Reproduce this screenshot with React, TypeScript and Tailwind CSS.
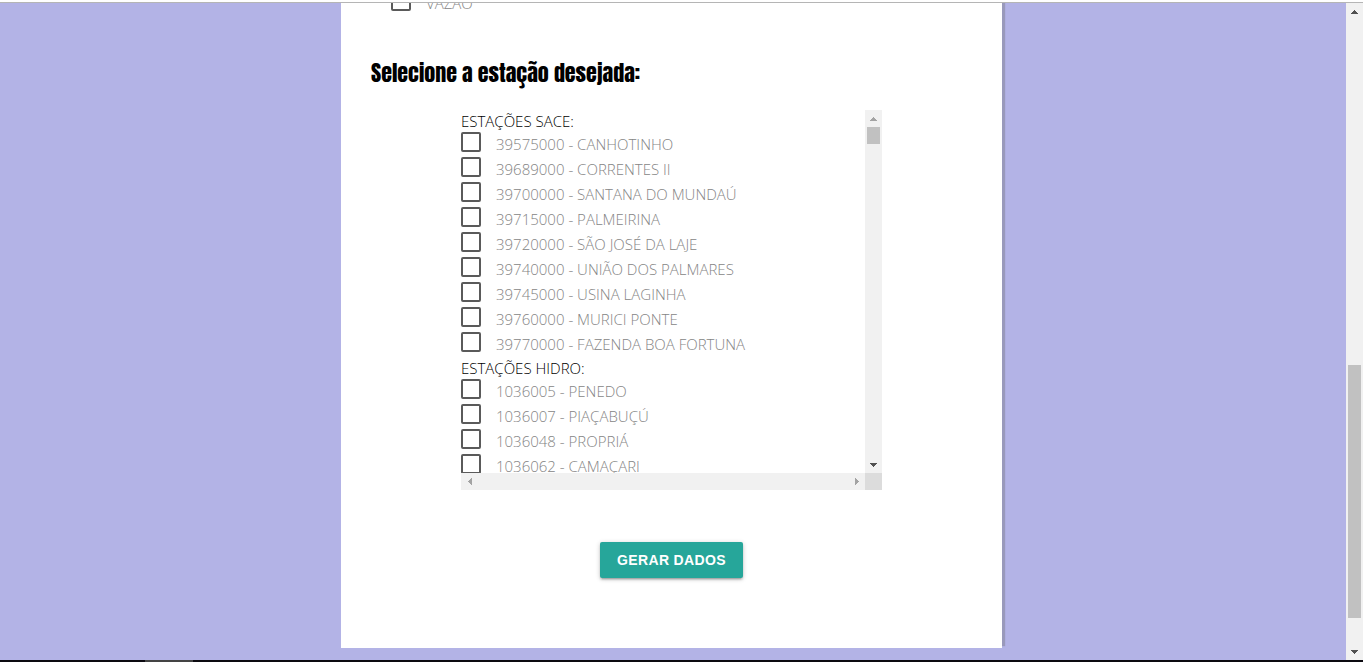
type Station = { code: string; name: string };

const SACE: Station[] = [
  { code: "39575000", name: "CANHOTINHO" },
  { code: "39689000", name: "CORRENTES II" },
  { code: "39700000", name: "SANTANA DO MUNDAÚ" },
  { code: "39715000", name: "PALMEIRINA" },
  { code: "39720000", name: "SÃO JOSÉ DA LAJE" },
  { code: "39740000", name: "UNIÃO DOS PALMARES" },
  { code: "39745000", name: "USINA LAGINHA" },
  { code: "39760000", name: "MURICI PONTE" },
  { code: "39770000", name: "FAZENDA BOA FORTUNA" },
];

const HIDRO: Station[] = [
  { code: "1036005", name: "PENEDO" },
  { code: "1036007", name: "PIAÇABUÇÚ" },
  { code: "1036048", name: "PROPRIÁ" },
  { code: "1036062", name: "CAMAÇARI" },
];

function CheckRow({ id, label }: { id: string; label: string }) {
  return (
    <div className="flex h-[25px] shrink-0 items-start">
      <input
        id={id}
        type="checkbox"
        className="size-5 shrink-0 appearance-none rounded-[2px] border-2 border-[#5a5a5a] bg-white checked:bg-[#26a69a]"
      />
      <label htmlFor={id} className="pl-[15px] leading-[25px] whitespace-nowrap text-[#858585]">
        {label}
      </label>
    </div>
  );
}

function Group({ title, stations }: { title: string; stations: Station[] }) {
  return (
    <fieldset>
      <legend className="block h-[22px] leading-[23px] text-black">{title}</legend>
      {stations.map((s) => (
        <CheckRow key={s.code} id={s.code} label={`${s.code} - ${s.name}`} />
      ))}
    </fieldset>
  );
}

const ARROWS = {
  up: "M3 0h1v1h1v1h1v1h1v1H0V3h1V2h1V1h1z",
  down: "M0 0h7v1H6v1H5v1H4v1H3V3H2V2H1V1H0z",
  left: "M3 0h1v7H3V6H2V5H1V4H0V3h1V2h1V1h1z",
  right: "M0 0h1v1h1v1h1v1h1v1H3v1H2v1H1v1H0z",
};

function Arrow({ dir, className }: { dir: keyof typeof ARROWS; className: string }) {
  const vertical = dir === "up" || dir === "down";
  return (
    <span className="flex size-[17px] shrink-0 items-center justify-center" aria-hidden="true">
      <svg
        width={vertical ? 7 : 4}
        height={vertical ? 4 : 7}
        className={className}
        fill="currentColor"
        shapeRendering="crispEdges"
      >
        <path d={ARROWS[dir]} />
      </svg>
    </span>
  );
}

export default function App() {
  return (
    <div className="flex min-h-screen flex-col bg-white font-['Segoe_UI','Open_Sans',sans-serif] text-[15px] font-light">
      <div className="h-[3px] border-b border-[#b5b5b5]" />
      <div className="flex flex-1">
        <main className="flex-1 overflow-hidden bg-[#b3b3e6] pr-[3px] pb-3">
          <form
            className="mx-auto w-[661px] max-w-full bg-white px-[30px] pb-[70px] shadow-[3px_-2px_1px_#9999bb]"
            onSubmit={(e) => e.preventDefault()}
          >
            <div className="flex h-[13px] flex-col justify-end overflow-hidden pl-5">
              <CheckRow id="vazao" label="VAZÃO" />
            </div>
            <h2 className="mt-10 h-[34px] font-['Impact','Anton','Open_Sans',sans-serif] text-[22px] leading-[34px] font-normal whitespace-nowrap text-black">
              Selecione a estação desejada:
            </h2>
            <div className="mx-auto mt-5 grid w-[421px] max-w-full grid-cols-[1fr_17px] grid-rows-[363px_17px]">
              <div className="overflow-hidden">
                <Group title="ESTAÇÕES SACE:" stations={SACE} />
                <Group title="ESTAÇÕES HIDRO:" stations={HIDRO} />
              </div>
              <div className="flex flex-col bg-[#f1f1f1]">
                <Arrow dir="up" className="text-[#a3a3a3]" />
                <div className="mx-[2px] h-[17px] bg-[#c1c1c1]" />
                <div className="flex-1" />
                <Arrow dir="down" className="text-[#505050]" />
              </div>
              <div className="flex justify-between bg-[#f1f1f1]">
                <Arrow dir="left" className="text-[#a3a3a3]" />
                <Arrow dir="right" className="text-[#a3a3a3]" />
              </div>
              <div className="bg-[#dcdcdc]" />
            </div>
            <div className="mt-[52px] flex justify-center">
              <button
                type="submit"
                className="h-9 rounded-[2px] bg-[#26a69a] px-[17px] font-['Liberation_Sans',Arial,sans-serif] text-[14px] font-bold tracking-wide whitespace-nowrap text-white shadow-[0_2px_2px_0_rgba(0,0,0,0.14),0_3px_1px_-2px_rgba(0,0,0,0.12),0_1px_5px_0_rgba(0,0,0,0.2)]"
              >
                GERAR DADOS
              </button>
            </div>
          </form>
        </main>
        <div className="flex w-[17px] shrink-0 flex-col bg-[#f1f1f1]">
          <Arrow dir="up" className="text-[#505050]" />
          <div className="grow-[345]" />
          <div className="mx-[2px] h-[253px] bg-[#c1c1c1]" />
          <div className="grow-[25]" />
          <Arrow dir="down" className="text-[#505050]" />
        </div>
      </div>
      <div className="flex h-[2px] bg-[#0c0a10]">
        <div className="ml-[145px] w-12 bg-[#444444]" />
      </div>
    </div>
  );
}
